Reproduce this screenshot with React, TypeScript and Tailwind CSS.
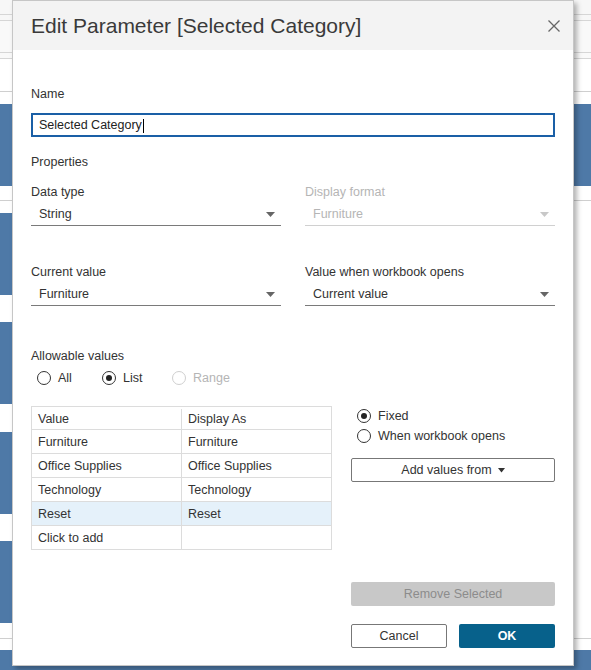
import React from "react";

const Caret = ({ color = "#666" }: { color?: string }) => (
  <svg width="9" height="5" viewBox="0 0 9 5">
    <path d="M0 0 L9 0 L4.5 5 Z" fill={color} />
  </svg>
);

const Radio = ({ checked = false, disabled = false }: { checked?: boolean; disabled?: boolean }) => (
  <span
    className={
      "flex h-[14px] w-[14px] items-center justify-center rounded-full border bg-white " +
      (disabled ? "border-[#cfcfcf]" : "border-[#333]")
    }
  >
    {checked && <span className="h-[6px] w-[6px] rounded-full bg-[#222]" />}
  </span>
);

const Select = ({ value, disabled = false }: { value: string; disabled?: boolean }) => (
  <div
    className={
      "mt-[2px] flex h-[25px] items-center justify-between border-b pl-[8px] pr-[6px] pt-[2px] " +
      (disabled ? "border-[#d0d0d0] text-[#b5b5b5]" : "border-[#7a7a7a] text-[#333]")
    }
  >
    <span>{value}</span>
    <Caret color={disabled ? "#c8c8c8" : "#666"} />
  </div>
);

const Label = ({ children, disabled = false, className = "" }: { children: React.ReactNode; disabled?: boolean; className?: string }) => (
  <div className={"h-[16px] leading-[18px] " + (disabled ? "text-[#b5b5b5] " : "text-[#333] ") + className}>{children}</div>
);

const rows: [string, string, boolean][] = [
  ["Furniture", "Furniture", false],
  ["Office Supplies", "Office Supplies", false],
  ["Technology", "Technology", false],
  ["Reset", "Reset", true],
  ["Click to add", "", false],
];

export default function App() {
  return (
    <div className="relative h-[670px] w-[591px] overflow-hidden bg-white font-['Liberation_Sans',Arial,sans-serif] text-[12.5px] text-[#333]">
      {/* background worksheet */}
      <div className="flex flex-col">
        <div className="h-[14px] bg-[#f7f7f7]" />
        <div className="h-px bg-[#d6d6d6]" />
        <div className="h-[5px] bg-[#f7f7f7]" />
        <div className="h-px bg-[#d6d6d6]" />
        <div className="h-[31px] bg-[#f9f9f9]" />
        <div className="h-px bg-[#d6d6d6]" />
        <div className="h-[5px] bg-[#f9f9f9]" />
        <div className="h-px bg-[#d6d6d6]" />
        <div className="h-[32px] bg-white" />
        <div className="h-px bg-[#cfcfcf]" />
        <div className="h-[12px]" />
        <div className="h-[82px] bg-[#4e79a7]" />
        <div className="h-[14px]" />
        <div className="h-px bg-[#cfcfcf]" />
        <div className="flex h-[437px] justify-between">
          <div className="flex w-[12px] flex-col">
            <div className="h-[12px]" />
            <div className="h-[82px] bg-[#4e79a7]" />
            <div className="h-[27px]" />
            <div className="h-[82px] bg-[#4e79a7]" />
            <div className="h-[28px]" />
            <div className="h-[82px] bg-[#4e79a7]" />
            <div className="h-[27px]" />
            <div className="h-[82px] bg-[#4e79a7]" />
          </div>
          <div className="w-[17px]" />
        </div>
        <div className="h-px bg-[#cfcfcf]" />
        <div className="h-[11px]" />
        <div className="h-[20px] bg-[#4e79a7]" />
      </div>

      {/* dialog */}
      <div className="absolute left-[12px] top-0 flex h-[666px] w-[562px] flex-col border border-[#c6c6c6] bg-white shadow-[3px_3px_5px_rgba(0,0,0,0.3)]">
        <div className="flex h-[49px] items-center justify-between bg-[#f3f3f3] pl-[18px] pr-[13px]">
          <span className="pt-[1px] text-[21px] text-[#3a3a3a]">Edit Parameter [Selected Category]</span>
          <svg width="12" height="12" viewBox="0 0 12 12">
            <path d="M0.5 0.5 L11.5 11.5 M11.5 0.5 L0.5 11.5" stroke="#666" strokeWidth="1.3" fill="none" />
          </svg>
        </div>

        <div className="flex flex-1 flex-col px-[18px]">
          <Label className="mt-[35px]">Name</Label>
          <div className="mt-[12px] flex h-[24px] items-center border-2 border-[#1a5fa6] pl-[6px] pt-[1px]">
            <span className="text-[#222]">Selected Category</span>
            <span className="ml-[1px] h-[14px] w-px bg-black" />
          </div>

          <Label className="mt-[16px]">Properties</Label>

          <div className="mt-[14px] grid grid-cols-2 gap-x-[24px]">
            <div>
              <Label>Data type</Label>
              <Select value="String" />
            </div>
            <div>
              <Label disabled>Display format</Label>
              <Select value="Furniture" disabled />
            </div>
          </div>

          <div className="mt-[37px] grid grid-cols-2 gap-x-[24px]">
            <div>
              <Label>Current value</Label>
              <Select value="Furniture" />
            </div>
            <div>
              <Label>Value when workbook opens</Label>
              <Select value="Current value" />
            </div>
          </div>

          <Label className="mt-[41px]">Allowable values</Label>
          <div className="mt-[8px] flex h-[14px] items-center pl-[6px]">
            <div className="flex w-[65px] items-center gap-[7px]">
              <Radio />
              <span>All</span>
            </div>
            <div className="flex w-[70px] items-center gap-[7px]">
              <Radio checked />
              <span>List</span>
            </div>
            <div className="flex items-center gap-[7px] text-[#b5b5b5]">
              <Radio disabled />
              <span>Range</span>
            </div>
          </div>

          <div className="mt-[21px] flex">
            <div className="w-[301px] border-x border-t border-[#dcdcdc]">
              <div className="flex h-[23px] border-b border-[#dcdcdc] pt-[2px]">
                <div className="flex w-[150px] items-center border-r border-[#dcdcdc] pl-[6px]">Value</div>
                <div className="flex flex-1 items-center pl-[6px]">Display As</div>
              </div>
              {rows.map(([v, d, sel]) => (
                <div key={v} className={"flex h-[24px] border-b border-[#dcdcdc] " + (sel ? "bg-[#e5f1fa]" : "")}>
                  <div className="flex w-[150px] items-center border-r border-[#dcdcdc] pl-[6px] pt-[2px]">{v}</div>
                  <div className="flex flex-1 items-center pl-[6px] pt-[2px]">{d}</div>
                </div>
              ))}
            </div>
            <div className="ml-[19px] flex flex-1 flex-col">
              <div className="mt-[3px] flex h-[14px] items-center gap-[7px] pl-[6px]">
                <Radio checked />
                <span>Fixed</span>
              </div>
              <div className="mt-[6px] flex h-[14px] items-center gap-[7px] pl-[6px]">
                <Radio />
                <span>When workbook opens</span>
              </div>
              <div className="mt-[15px] flex h-[24px] items-center justify-center gap-[6px] rounded-[2px] border border-[#777] text-[#333]">
                <span>Add values from</span>
                <svg width="7" height="5" viewBox="0 0 7 5">
                  <path d="M0 0 L7 0 L3.5 4.5 Z" fill="#333" />
                </svg>
              </div>
            </div>
          </div>

          <div className="mt-[32px] flex justify-end">
            <div className="flex h-[24px] w-[204px] items-center justify-center rounded-[2px] bg-[#c8c8c8] text-[#8c8c8c]">
              Remove Selected
            </div>
          </div>
          <div className="mt-[18px] flex justify-end gap-[12px]">
            <div className="flex h-[24px] w-[96px] items-center justify-center rounded-[2px] border border-[#777] text-[#333]">
              Cancel
            </div>
            <div className="flex h-[24px] w-[96px] items-center justify-center rounded-[2px] bg-[#07618b] font-bold text-white">
              OK
            </div>
          </div>
        </div>
      </div>
    </div>
  );
}
